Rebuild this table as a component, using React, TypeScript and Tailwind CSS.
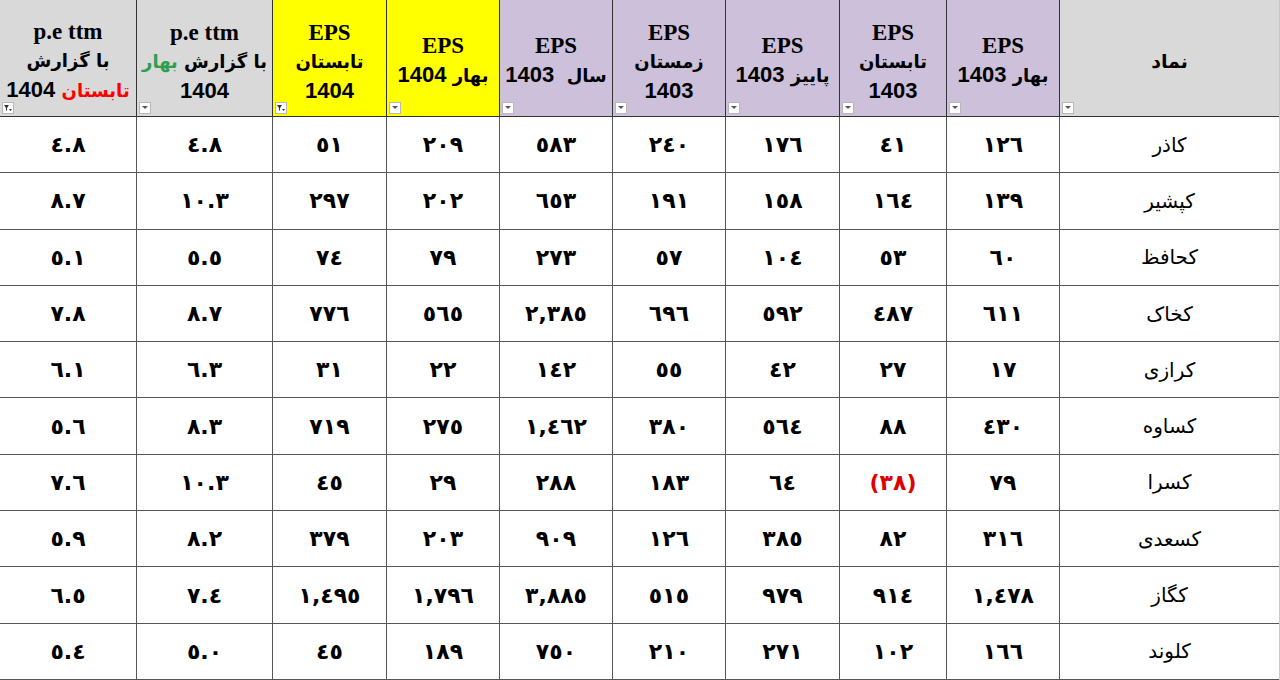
import React from "react"

const cols = "grid-cols-[220px_113px_107px_114px_113px_113px_113px_114px_136px_137px]"

const rows: { name: string; vals: string[] }[] = [
  { name: "کاذر", vals: ["١٢٦", "٤١", "١٧٦", "٢٤٠", "٥٨٣", "٢٠٩", "٥١", "٤.٨", "٤.٨"] },
  { name: "کپشیر", vals: ["١٣٩", "١٦٤", "١٥٨", "١٩١", "٦٥٣", "٢٠٢", "٢٩٧", "١٠.٣", "٨.٧"] },
  { name: "کحافظ", vals: ["٦٠", "٥٣", "١٠٤", "٥٧", "٢٧٣", "٧٩", "٧٤", "٥.٥", "٥.١"] },
  { name: "کخاک", vals: ["٦١١", "٤٨٧", "٥٩٢", "٦٩٦", "٢,٣٨٥", "٥٦٥", "٧٧٦", "٨.٧", "٧.٨"] },
  { name: "کرازی", vals: ["١٧", "٢٧", "٤٢", "٥٥", "١٤٢", "٢٢", "٣١", "٦.٣", "٦.١"] },
  { name: "کساوه", vals: ["٤٣٠", "٨٨", "٥٦٤", "٣٨٠", "١,٤٦٢", "٢٧٥", "٧١٩", "٨.٣", "٥.٦"] },
  { name: "کسرا", vals: ["٧٩", "(٣٨)", "٦٤", "١٨٣", "٢٨٨", "٢٩", "٤٥", "١٠.٣", "٧.٦"] },
  { name: "کسعدی", vals: ["٣١٦", "٨٢", "٣٨٥", "١٢٦", "٩٠٩", "٢٠٣", "٣٧٩", "٨.٢", "٥.٩"] },
  { name: "کگاز", vals: ["١,٤٧٨", "٩١٤", "٩٧٩", "٥١٥", "٣,٨٨٥", "١,٧٩٦", "١,٤٩٥", "٧.٤", "٦.٥"] },
  { name: "کلوند", vals: ["١٦٦", "١٠٢", "٢٧١", "٢١٠", "٧٥٠", "١٨٩", "٤٥", "٥.٠", "٥.٤"] },
]

const FilterBtn = ({ active }: { active?: boolean }) => (
  <div className="absolute bottom-[2px] left-[2px] w-[12px] h-[12px] bg-white border border-[#b8b8b8] flex items-center justify-center">
    {active ? (
      <svg width="8" height="8" viewBox="0 0 8 8">
        <path d="M0 1h5L3 4v3L2 6V4z" fill="#333" />
        <path d="M5 5h3L6.5 7z" fill="#333" />
      </svg>
    ) : (
      <svg width="6" height="4" viewBox="0 0 6 4">
        <path d="M0 0h6L3 3z" fill="#555" />
      </svg>
    )}
  </div>
)

const Eps = () => <div className="font-['Liberation_Serif',serif] font-bold text-[23px]">EPS</div>
const Num = ({ n }: { n: string }) => <span className="font-['Liberation_Sans',sans-serif] font-bold text-[22px]">{n}</span>

const Head = ({ bg, children, active }: { bg: string; children: React.ReactNode; active?: boolean }) => (
  <div className={`relative ${bg} border-l border-b border-[#333] flex flex-col items-center justify-center text-center text-black leading-[29px] whitespace-nowrap pt-[6px]`}>
    {children}
    <FilterBtn active={active} />
  </div>
)

const fa = "font-['DejaVu_Sans',sans-serif] font-bold text-[18px]"

export default function App() {
  return (
    <div dir="rtl" className={`grid ${cols} grid-rows-[117px_repeat(10,1fr)] w-[1280px] h-[680px] bg-white border-r border-[#c8c8c8] overflow-hidden`}>
      <Head bg="bg-[#d9d9d9]">
        <span className="font-['DejaVu_Sans',sans-serif] font-bold text-[19px]">نماد</span>
      </Head>
      <Head bg="bg-[#ccc0da]">
        <Eps />
        <div><span className={fa}>بهار </span><Num n="1403" /></div>
      </Head>
      <Head bg="bg-[#ccc0da]">
        <Eps />
        <div className={fa}>تابستان</div>
        <Num n="1403" />
      </Head>
      <Head bg="bg-[#ccc0da]">
        <Eps />
        <div><span className={fa}>پاییز </span><Num n="1403" /></div>
      </Head>
      <Head bg="bg-[#ccc0da]">
        <Eps />
        <div className={fa}>زمستان</div>
        <Num n="1403" />
      </Head>
      <Head bg="bg-[#ccc0da]">
        <Eps />
        <div className="whitespace-pre"><span className={fa}>سال  </span><Num n="1403" /></div>
      </Head>
      <Head bg="bg-[#ffff00]">
        <Eps />
        <div><span className={fa}>بهار </span><Num n="1404" /></div>
      </Head>
      <Head bg="bg-[#ffff00]" active>
        <Eps />
        <div className={fa}>تابستان</div>
        <Num n="1404" />
      </Head>
      <Head bg="bg-[#d9d9d9]">
        <div dir="ltr" className="font-['Liberation_Serif',serif] font-bold text-[23px]">p.e ttm</div>
        <div className={fa}>با گزارش <span className="text-[#2e9e4f]">بهار</span></div>
        <Num n="1404" />
      </Head>
      <Head bg="bg-[#d9d9d9]" active>
        <div dir="ltr" className="font-['Liberation_Serif',serif] font-bold text-[23px]">p.e ttm</div>
        <div className={fa}>با گزارش</div>
        <div><span className={`${fa} text-[#ff0000]`}>تابستان </span><Num n="1404" /></div>
      </Head>

      {rows.map((r) => (
        <React.Fragment key={r.name}>
          <div className="border-l border-b border-[#555] flex items-center justify-center font-['DejaVu_Sans',sans-serif] text-[20px] text-black">
            {r.name}
          </div>
          {r.vals.map((v, i) => (
            <div
              key={i}
              className={`border-l border-b border-[#555] flex items-center justify-center font-['DejaVu_Sans',sans-serif] font-bold text-[22px] ${v.startsWith("(") ? "text-[#e00000]" : "text-black"}`}
            >
              {v}
            </div>
          ))}
        </React.Fragment>
      ))}
    </div>
  )
}
